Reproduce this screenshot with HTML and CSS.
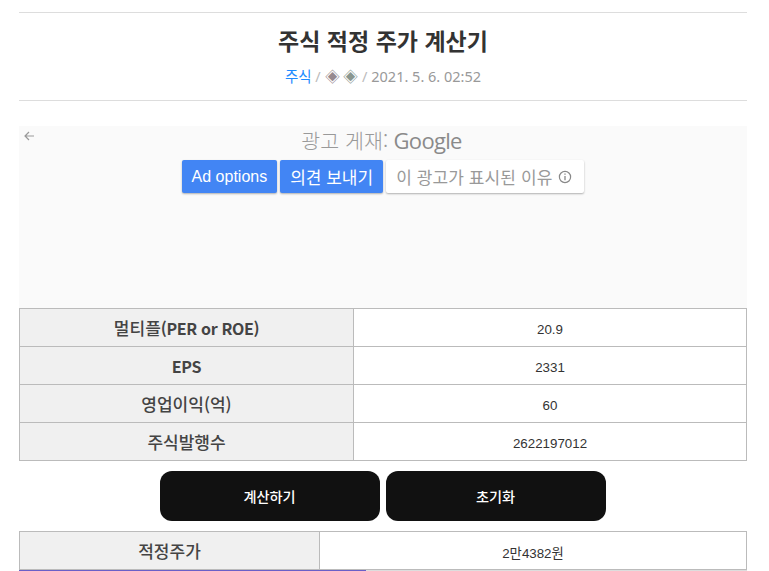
FILE: index.html
```html
<!DOCTYPE html>
<html lang="ko">
<head>
<meta charset="utf-8">
<title>주식 적정 주가 계산기</title>
<link rel="stylesheet" href="styles.css">
</head>
<body>
<div class="page">
  <header class="post-head">
    <h1 class="post-title">주식 적정 주가 계산기</h1>
    <div class="post-meta"><a class="cat" href="#">주식</a> <span class="sep">/</span> <span class="dia d1">◈</span> <span class="dia d2">◈</span> <span class="sep">/</span> 2021. 5. 6. 02:52</div>
  </header>
  <section class="ad">
    <svg class="ad-back" width="12" height="12" viewBox="0 0 12 12"><path d="M11 6H2M6 2L2 6l4 4" fill="none" stroke="#999" stroke-width="1.2"/></svg>
    <div class="ad-by"><span class="ad-label">광고 게재:</span> <span class="ad-logo">Google</span></div>
    <div class="ad-btns">
      <span class="ad-btn blue latin">Ad options</span>
      <span class="ad-btn blue">의견 보내기</span>
      <span class="ad-btn white">이 광고가 표시된 이유
        <svg class="info" width="14" height="14" viewBox="0 0 14 14"><circle cx="7" cy="7" r="5.6" fill="none" stroke="#888" stroke-width="1.2"/><path d="M7 6v4.2M7 3.4v1.4" stroke="#888" stroke-width="1.3"/></svg>
      </span>
    </div>
  </section>
  <div class="calc">
    <div class="row"><div class="th"><span>멀티플<span class="lat">(PER or ROE)</span></span></div><div class="td">20.9</div></div>
    <div class="row"><div class="th"><span class="lat">EPS</span></div><div class="td">2331</div></div>
    <div class="row"><div class="th">영업이익(억)</div><div class="td">60</div></div>
    <div class="row"><div class="th">주식발행수</div><div class="td">2622197012</div></div>
  </div>
  <div class="actions">
    <button class="act" type="button">계산하기</button>
    <button class="act" type="button">초기화</button>
  </div>
  <div class="result">
    <div class="th">적정주가</div><div class="td">2만4382원</div>
  </div>
  <div class="progress"><div class="progress-fill"></div></div>
</div>
</body>
</html>
```
FILE: styles.css
```css
* { box-sizing: border-box; }
html, body { margin: 0; background: #fff; height: 571px; overflow: hidden; }
body { font-family: "Noto Sans CJK KR", "Noto Sans", sans-serif; color: #333; }
.page { width: 728px; margin-left: 19px; padding-top: 12px; }
.post-head { height: 89px; border-top: 1px solid #ddd; border-bottom: 1px solid #ddd; text-align: center; }
.post-title { margin: 0; padding-top: 11px; font-size: 23px; line-height: 32px; font-weight: 700; color: #333; }
.post-meta { margin-top: 10px; font-size: 14.5px; line-height: 20px; color: #999; font-family: "Noto Sans", "Noto Sans CJK KR", sans-serif; }
.cat { color: #1e8cff; text-decoration: none; font-family: "Noto Sans CJK KR", sans-serif; }
.sep { color: #bbb; }
.dia { font-family: "Noto Sans CJK KR", sans-serif; font-size: 15px; }
.d1 { color: #96898f; }
.d2 { color: #89968f; }
.ad { position: relative; margin-top: 25px; height: 182px; background: #fafafa; text-align: center; }
.ad-back { position: absolute; left: 4px; top: 4px; }
.ad-by { height: 29px; line-height: 29px; padding-right: 3px; color: #999; }
.ad-label { font-family: "Noto Sans CJK KR", sans-serif; font-size: 20.6px; font-weight: 300; margin-right: 1px; }
.ad-logo { font-family: "Open Sans", sans-serif; font-size: 22px; font-weight: 500; color: #8a8a8a; letter-spacing: -0.7px; }
.ad-btns { display: flex; justify-content: center; gap: 3px; margin-top: 5px; }
.ad-btn { display: flex; align-items: center; height: 33px; padding: 0 10px; border-radius: 2px; font-family: "Noto Sans CJK KR", sans-serif; font-size: 17px; font-weight: 400; box-shadow: 0 1px 2px rgba(0,0,0,.3); }
.latin { font-family: "Liberation Sans", sans-serif; font-size: 16px; }
.blue { background: #4285f4; color: #fff; }
.white { background: #fff; color: #999; gap: 6px; padding-right: 12px; letter-spacing: .1px; }
.info { flex: none; }
.calc { border-top: 1px solid #bbb; border-left: 1px solid #bbb; }
.row { display: grid; grid-template-columns: 334px 1fr; height: 38px; border-bottom: 1px solid #bbb; border-right: 1px solid #bbb; }
.th { display: flex; align-items: center; justify-content: center; background: #f0f0f0; font-size: 17px; font-weight: 500; color: #444; border-right: 1px solid #bbb; }
.lat { font-size: 16px; font-weight: 700; letter-spacing: -.35px; }
.td { display: flex; align-items: center; justify-content: center; padding-top: 3px; font-family: "Liberation Sans", "Noto Sans CJK KR", sans-serif; font-size: 13.33px; color: #333; background: #fff; }
.actions { display: flex; justify-content: center; gap: 6px; margin-top: 10px; padding-right: 1px; }
.act { width: 220px; height: 50px; border: 0; border-radius: 12px; background: #111; color: #fff; font-family: "Noto Sans CJK KR", sans-serif; font-size: 14.2px; font-weight: 500; }
.result { display: grid; grid-template-columns: 300px 1fr; height: 39px; margin-top: 10px; border: 1px solid #bbb; }
.progress { height: 1px; background: #ddd; }
.progress-fill { width: 347px; height: 1px; background: #6a5fc8; }
```
